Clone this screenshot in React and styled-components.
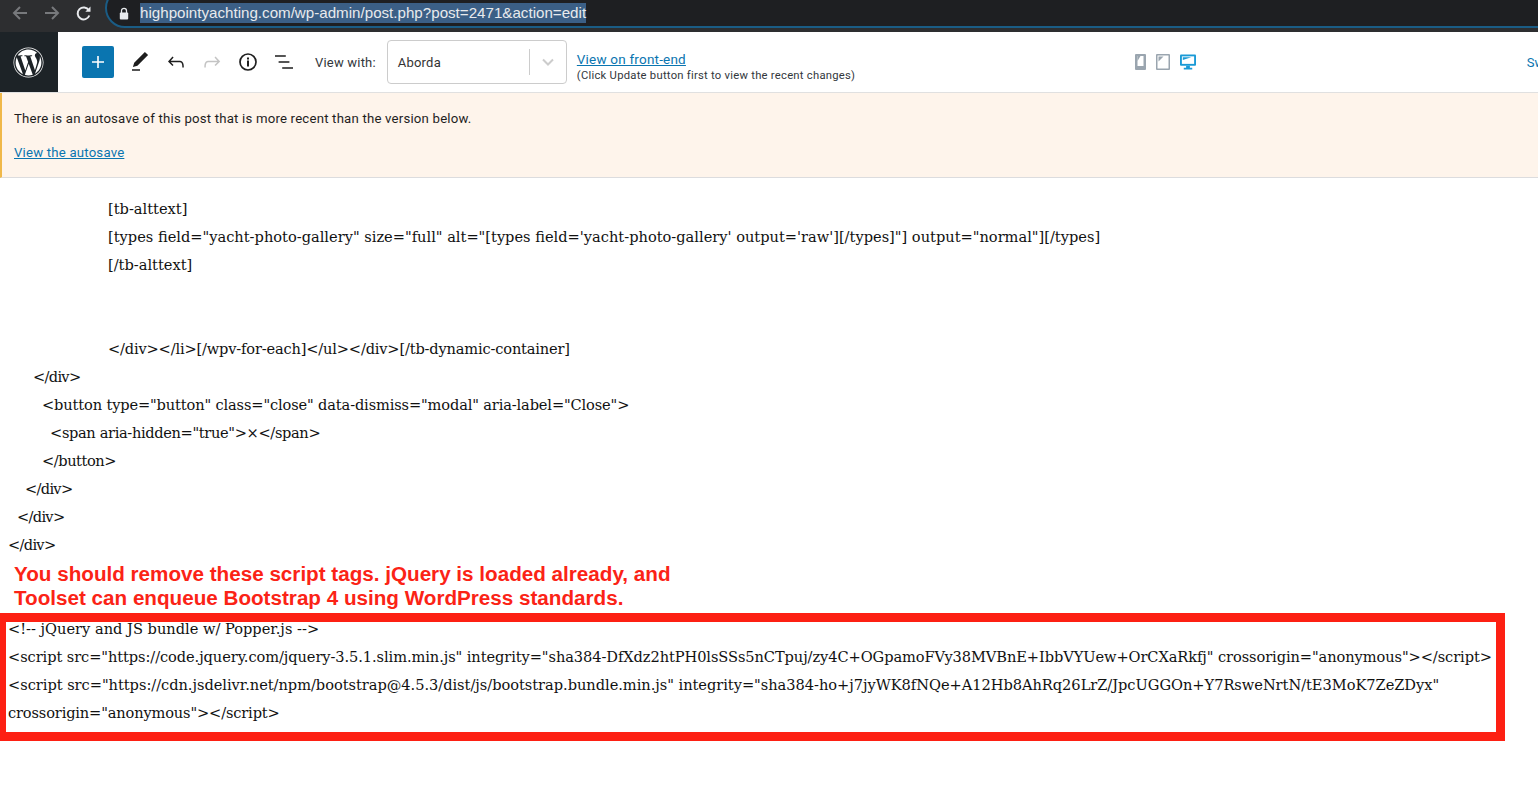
import React from "react";
import styled, { createGlobalStyle } from "styled-components";
import { FaWordpress } from "react-icons/fa";

const GlobalStyle = createGlobalStyle`
  html, body {
    margin: 0;
    background: #fff;
    overflow: hidden;
  }
`;

const Page = styled.div`
  width: 1538px;
  height: 797px;
  overflow: hidden;
  font-family: "Roboto", "Liberation Sans", sans-serif;
`;

const BrowserBar = styled.div`
  height: 32px;
  background: #2d2e30;
  display: flex;
  box-sizing: border-box;
  overflow: hidden;
`;

const NavButtons = styled.div`
  width: 105px;
  flex-shrink: 0;
  display: flex;
  align-items: center;
  gap: 14px;
  padding: 0 0 6px 11px;
  box-sizing: border-box;
`;

const AddressPill = styled.div`
  flex: 1;
  height: 40px;
  margin-top: -12px;
  margin-right: -30px;
  box-sizing: border-box;
  background: #1e1f22;
  border: 2px solid #1a5c85;
  border-radius: 20px;
  display: flex;
  align-items: center;
  padding: 10px 0 0 12px;
  gap: 11px;
`;

const Url = styled.span`
  background: #3b5f86;
  color: #e8eaed;
  font-family: "Liberation Sans", sans-serif;
  font-size: 15.15px;
  line-height: 20px;
  white-space: nowrap;
`;

const Toolbar = styled.div`
  height: 61px;
  box-sizing: border-box;
  border-bottom: 1px solid #e0e0e0;
  display: flex;
  align-items: center;
  background: #fff;
  overflow: hidden;
`;

const LogoTile = styled.div`
  width: 58px;
  height: 60px;
  flex-shrink: 0;
  box-sizing: border-box;
  padding-right: 2px;
  background: #1d2327;
  display: flex;
  align-items: center;
  justify-content: center;
  color: #fff;
`;

const PlusButton = styled.div`
  width: 32px;
  height: 32px;
  margin-left: 24px;
  flex-shrink: 0;
  border-radius: 2px;
  background: #0a75b0;
  display: flex;
  align-items: center;
  justify-content: center;
`;

const ToolIcons = styled.div`
  display: flex;
  align-items: center;
  gap: 12px;
  margin-left: 14px;
  flex-shrink: 0;
`;

const ViewLabel = styled.span`
  margin-left: 19px;
  font-size: 13px;
  letter-spacing: 0.2px;
  color: #32373c;
  white-space: nowrap;
`;

const SelectBox = styled.div`
  width: 180px;
  height: 44px;
  margin-left: 11px;
  flex-shrink: 0;
  box-sizing: border-box;
  border: 1px solid #ccc;
  border-radius: 4px;
  display: flex;
  align-items: center;
  padding-left: 10px;
  font-size: 13px;
  letter-spacing: 0.2px;
  color: #333;
`;

const SelectValue = styled.span`
  flex: 1;
`;

const SelectArrow = styled.span`
  width: 36px;
  height: 26px;
  border-left: 1px solid #ccc;
  display: flex;
  align-items: center;
  justify-content: center;
`;

const FrontEnd = styled.div`
  margin-left: 10px;
  width: 558px;
  flex-shrink: 0;
  display: flex;
  flex-direction: column;
  padding-top: 10px;
`;

const StyledLink = styled.a`
  color: #0a75b0;
  text-decoration: underline;
  font-size: ${(p) => p.$size}px;
  letter-spacing: 0.2px;
  line-height: 16px;
`;

const Hint = styled.span`
  margin-top: 1px;
  font-size: 11.25px;
  letter-spacing: 0.25px;
  line-height: 15px;
  color: #32373c;
`;

const Devices = styled.div`
  display: flex;
  align-items: center;
  gap: 10px;
  flex-shrink: 0;
`;

const SwitchLink = styled.span`
  margin-left: 331px;
  font-size: 13px;
  color: #0a75b0;
  white-space: nowrap;
  flex-shrink: 0;
`;

const Notice = styled.div`
  height: 85px;
  box-sizing: border-box;
  background: #fef4eb;
  border-left: 2px solid #f0b849;
  border-bottom: 1px solid #dcdcde;
  padding: 18px 12px 0;
  font-size: 13.2px;
  letter-spacing: 0.2px;
  color: #1e1e1e;
  line-height: 16px;
`;

const NoticeAction = styled.div`
  margin-top: 18px;
`;

const Editor = styled.div`
  position: relative;
  padding: 17px 0 0 8px;
  font-family: "DejaVu Serif", serif;
  font-size: 14.6px;
  line-height: 28px;
  color: #111;
`;

const CodeLine = styled.div`
  height: 28px;
  white-space: pre;
  margin-left: ${(p) => p.$indent || 0}px;
  letter-spacing: ${(p) => p.$spacing || 0}px;
`;

const Callout = styled.div`
  position: absolute;
  left: 14px;
  top: 384px;
  font-family: "Liberation Sans", sans-serif;
  font-weight: 700;
  font-size: 20.65px;
  line-height: 24px;
  color: #fb2316;
  white-space: nowrap;
`;

const RedFrame = styled.div`
  position: absolute;
  left: 0;
  top: 435px;
  width: 1505px;
  height: 128px;
  box-sizing: border-box;
  border: 9px solid #fd2013;
  border-left-width: 6px;
`;

const Icon = ({ d, color = "#1e1e1e", size = 24 }) => (
  <svg width={size} height={size} viewBox="0 0 24 24" fill={color}>
    <path d={d} />
  </svg>
);

const ArrowIcon = ({ flip, color }) => (
  <svg width="18" height="18" viewBox="0 0 18 18" fill="none" stroke={color} strokeWidth="2" style={flip ? { transform: "scaleX(-1)" } : undefined}>
    <path d="M16 9H3M9 3L3 9l6 6" />
  </svg>
);

const ReloadIcon = () => (
  <svg width="18" height="18" viewBox="0 0 18 18" fill="none" stroke="#e8eaed" strokeWidth="2">
    <path d="M14.3 11.5a6 6 0 1 1-.5-5.2" />
    <path d="M15.5 2.5v5.2h-5.2z" fill="#e8eaed" stroke="none" />
  </svg>
);

const LockIcon = () => (
  <svg width="10" height="13" viewBox="0 0 10 13">
    <path d="M2.5 6V3.8a2.5 2.5 0 0 1 5 0V6" fill="none" stroke="#e8eaed" strokeWidth="1.3" />
    <rect x="0.8" y="5.5" width="8.4" height="7" rx="1" fill="#e8eaed" />
  </svg>
);

const InfoIcon = () => (
  <svg width="24" height="24" viewBox="0 0 24 24" fill="none">
    <circle cx="12" cy="12" r="8" stroke="#1e1e1e" strokeWidth="1.7" />
    <rect x="11" y="10.5" width="2" height="6" fill="#1e1e1e" />
    <rect x="11" y="7.5" width="2" height="2" fill="#1e1e1e" />
  </svg>
);

const PhoneIcon = () => (
  <svg width="11" height="16" viewBox="0 0 11 16">
    <rect width="11" height="16" rx="1" fill="#9aa5af" />
    <path d="M2.5 2h6v10h-6z" fill="#fff" />
    <path d="M2.5 2h3l-3 5z" fill="#9aa5af" />
  </svg>
);

const TabletIcon = () => (
  <svg width="14" height="16" viewBox="0 0 14 16">
    <rect width="14" height="16" rx="1" fill="#9aa5af" />
    <path d="M1.5 1.5h11v13h-11z" fill="#fff" />
    <path d="M2.5 2.5h5l-5 5z" fill="#9aa5af" />
  </svg>
);

const DesktopIcon = () => (
  <svg width="16" height="16" viewBox="0 0 17 16">
    <path d="M1 0h15a1 1 0 0 1 1 1v10a1 1 0 0 1-1 1H1a1 1 0 0 1-1-1V1a1 1 0 0 1 1-1z" fill="#1a9ad6" />
    <path d="M2 2h13v8H2z" fill="#fff" />
    <path d="M3 3h9L3 6z" fill="#1a9ad6" />
    <path d="M6.5 12h4v2h2.5v2H4v-2h2.5z" fill="#1a9ad6" />
  </svg>
);

const codeLines = [
  { indent: 100, text: "[tb-alttext]" },
  { indent: 100, text: `[types field="yacht-photo-gallery" size="full" alt="[types field='yacht-photo-gallery' output='raw'][/types]"] output="normal"][/types]` },
  { indent: 100, text: "[/tb-alttext]" },
  { text: "" },
  { text: "" },
  { indent: 100, spacing: -0.17, text: "</div></li>[/wpv-for-each]</ul></div>[/tb-dynamic-container]" },
  { indent: 25, spacing: -0.7, text: "</div>" },
  { indent: 34, spacing: -0.14, text: `<button type="button" class="close" data-dismiss="modal" aria-label="Close">` },
  { indent: 42, spacing: -0.35, text: `<span aria-hidden="true">×</span>` },
  { indent: 34, spacing: -0.45, text: "</button>" },
  { indent: 17, spacing: -0.7, text: "</div>" },
  { indent: 9, spacing: -0.7, text: "</div>" },
  { spacing: -0.7, text: "</div>" },
  { text: "" },
  { text: "" },
  { text: "<!-- jQuery and JS bundle w/ Popper.js -->" },
  { spacing: -0.08, text: `<script src="https://code.jquery.com/jquery-3.5.1.slim.min.js" integrity="sha384-DfXdz2htPH0lsSSs5nCTpuj/zy4C+OGpamoFVy38MVBnE+IbbVYUew+OrCXaRkfj" crossorigin="anonymous"></script>` },
  { spacing: -0.03, text: `<script src="https://cdn.jsdelivr.net/npm/bootstrap@4.5.3/dist/js/bootstrap.bundle.min.js" integrity="sha384-ho+j7jyWK8fNQe+A12Hb8AhRq26LrZ/JpcUGGOn+Y7RsweNrtN/tE3MoK7ZeZDyx"` },
  { spacing: -0.15, text: `crossorigin="anonymous"></script>` },
];

const App = () => (
  <Page>
    <GlobalStyle />
    <BrowserBar>
      <NavButtons>
        <ArrowIcon color="#77797c" />
        <ArrowIcon flip color="#77797c" />
        <ReloadIcon />
      </NavButtons>
      <AddressPill>
        <LockIcon />
        <Url>highpointyachting.com/wp-admin/post.php?post=2471&amp;action=edit</Url>
      </AddressPill>
    </BrowserBar>
    <Toolbar>
      <LogoTile>
        <FaWordpress size={31} />
      </LogoTile>
      <PlusButton>
        <Icon color="#fff" d="M18 11.2h-5.2V6h-1.6v5.2H6v1.6h5.2V18h1.6v-5.2H18z" />
      </PlusButton>
      <ToolIcons>
        <Icon d="M20.1 5.1L16.9 2 6.2 12.7l-1.3 4.4 4.5-1.3L20.1 5.1zM4 20.8h8v-1.5H4v1.5z" />
        <Icon d="M18.3 11.7c-.6-.6-1.4-.9-2.3-.9H6.7l2.9-3.3-1.1-1-4.5 5L8.5 16l1-1-2.7-2.7H16c.5 0 .9.2 1.3.5 1 1 1 3.4 1 4.5v.3h1.5v-.2c0-1.5 0-4.3-1.5-5.7z" />
        <Icon color="#c4c4c4" d="M15.6 6.5l-1.1 1 2.9 3.3H8c-.9 0-1.7.3-2.3.9-1.4 1.5-1.4 4.2-1.4 5.6v.2h1.5v-.3c0-1.1 0-3.5 1-4.5.3-.3.7-.5 1.3-.5h9.2L14.5 15l1.1 1.1 4.6-4.6-4.6-5z" />
        <InfoIcon />
        <Icon d="M13.8 5.2H3v1.5h10.8V5.2zm-3.6 12v1.5H21v-1.5H10.2zm7.2-6H6.6v1.5h10.8v-1.5z" />
      </ToolIcons>
      <ViewLabel>View with:</ViewLabel>
      <SelectBox>
        <SelectValue>Aborda</SelectValue>
        <SelectArrow>
          <svg width="12" height="8" viewBox="0 0 12 8" fill="none" stroke="#ccc" strokeWidth="2">
            <path d="M1 1.5l5 5 5-5" />
          </svg>
        </SelectArrow>
      </SelectBox>
      <FrontEnd>
        <StyledLink $size={13.5}>View on front-end</StyledLink>
        <Hint>(Click Update button first to view the recent changes)</Hint>
      </FrontEnd>
      <Devices>
        <PhoneIcon />
        <TabletIcon />
        <DesktopIcon />
      </Devices>
      <SwitchLink>Sw</SwitchLink>
    </Toolbar>
    <Notice>
      <div>There is an autosave of this post that is more recent than the version below.</div>
      <NoticeAction>
        <StyledLink $size={13.2}>View the autosave</StyledLink>
      </NoticeAction>
    </Notice>
    <Editor>
      {codeLines.map((line, i) => (
        <CodeLine key={i} $indent={line.indent} $spacing={line.spacing}>
          {line.text}
        </CodeLine>
      ))}
      <Callout>
        You should remove these script tags. jQuery is loaded already, and
        <br />
        Toolset can enqueue Bootstrap 4 using WordPress standards.
      </Callout>
      <RedFrame />
    </Editor>
  </Page>
);

export default App;
